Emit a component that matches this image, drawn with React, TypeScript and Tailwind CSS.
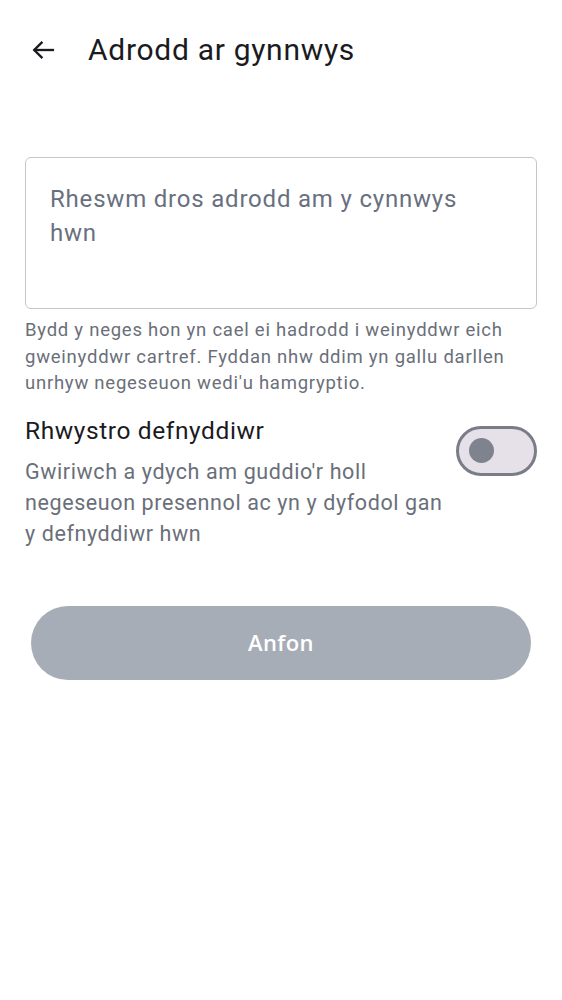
import React, { useState } from 'react';

export default function App() {
  const [blocked, setBlocked] = useState(false);
  const [reason, setReason] = useState('');

  return (
    <div className="min-h-screen w-full bg-white font-['Roboto',sans-serif] text-[#1b1b1f]">
      {/* Header */}
      <div className="flex items-center h-[100px] pl-[29px]">
        <svg width="28" height="28" viewBox="0 0 24 24" fill="none" stroke="#1b1b1f" strokeWidth="2" strokeLinecap="square">
          <path d="M20.5 12H5" />
          <path d="M11.5 5l-7 7 7 7" strokeLinecap="butt" />
        </svg>
        <h1 className="ml-[31px] text-[30px] leading-none font-normal tracking-[0.7px]">Adrodd ar gynnwys</h1>
      </div>

      <div className="px-[25px] pt-[57px]">
        {/* Reason field */}
        <textarea
          value={reason}
          onChange={(e) => setReason(e.target.value)}
          placeholder="Rheswm dros adrodd am y cynnwys hwn"
          className="block w-full h-[152px] resize-none rounded-[6px] border border-[#c3c6cf] pl-[24px] pr-[40px] pt-[24px] text-[24px] leading-[34px] tracking-[0.8px] text-[#1b1b1f] placeholder:text-[#687080] outline-none"
        />
        <p className="mt-[8px] text-[18.5px] leading-[26.5px] tracking-[0.75px] text-[#6a6f7a]">
          Bydd y neges hon yn cael ei hadrodd i weinyddwr eich gweinyddwr cartref. Fyddan nhw ddim yn gallu darllen unrhyw negeseuon wedi'u hamgryptio.
        </p>

        {/* Block user */}
        <div className="mt-[18px] flex items-start justify-between">
          <div className="w-[420px]">
            <div className="text-[24.5px] leading-[32px] tracking-[0.6px] text-[#1b1b1f]">Rhwystro defnyddiwr</div>
            <div className="mt-[9px] text-[21.5px] leading-[31px] tracking-[0.6px] text-[#6a6f7a]">
              Gwiriwch a ydych am guddio'r holl negeseuon presennol ac yn y dyfodol gan y defnyddiwr hwn
            </div>
          </div>
          <button
            onClick={() => setBlocked(!blocked)}
            className="mt-[11px] flex h-[50px] w-[81px] items-center rounded-full border-[3px] border-[#787d88] bg-[#e6e0e9] px-[10px]"
          >
            <span className="h-[25px] w-[25px] rounded-full bg-[#7e838e]" />
          </button>
        </div>

        {/* Send */}
        <div className="px-[6px] pt-[57px]">
          <button className="flex h-[74px] w-full items-center justify-center rounded-full bg-[#a7adb6] font-['Open_Sans',sans-serif] text-[22px] font-semibold tracking-[0.4px] text-white">
            Anfon
          </button>
        </div>
      </div>
    </div>
  );
}
